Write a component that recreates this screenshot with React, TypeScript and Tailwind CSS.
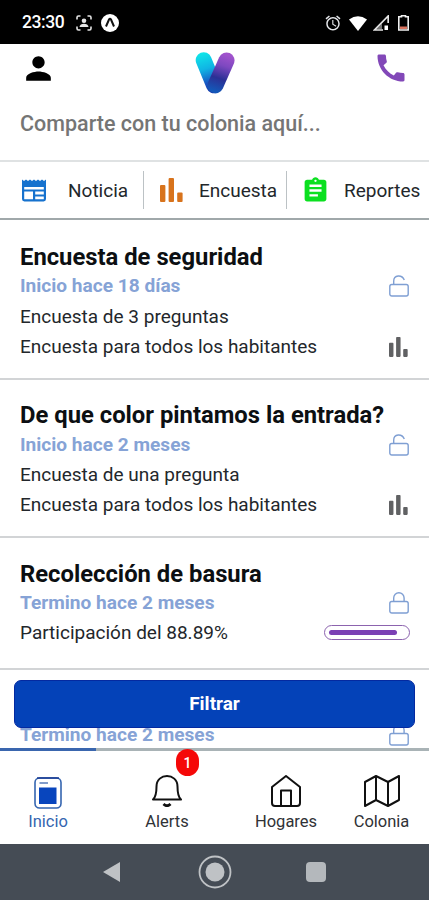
import React from "react";
import { MdAlarm, MdAssignment, MdCall, MdPerson } from "react-icons/md";

interface Survey {
  title: string;
  date: string;
  closed?: boolean;
  lines?: string[];
  participation?: number;
}

const surveys: Survey[] = [
  {
    title: "Encuesta de seguridad",
    date: "Inicio hace 18 días",
    lines: ["Encuesta de 3 preguntas", "Encuesta para todos los habitantes"],
  },
  {
    title: "De que color pintamos la entrada?",
    date: "Inicio hace 2 meses",
    lines: ["Encuesta de una pregunta", "Encuesta para todos los habitantes"],
  },
  { title: "Recolección de basura", date: "Termino hace 2 meses", closed: true, participation: 88.89 },
  { title: "", date: "Termino hace 2 meses", closed: true },
];

function BarsIcon({ className }: { className?: string }) {
  return (
    <svg viewBox="0 0 23 24" fill="currentColor" className={className}>
      <rect x="0" y="7" width="5.4" height="17" rx="1" />
      <rect x="8.6" y="0" width="5.4" height="24" rx="1" />
      <rect x="17.2" y="14.5" width="5.4" height="9.5" rx="1" />
    </svg>
  );
}

function LockIcon({ closed }: { closed?: boolean }) {
  return (
    <svg viewBox="0 0 20 22" fill="none" stroke="#7f9fd3" strokeWidth="1.4" className="h-[22px] w-5">
      <rect x="0.8" y="9.5" width="18.4" height="11.5" rx="2" />
      {closed ? <path d="M4.7 9.5V6a5.2 5.2 0 0 1 10.4 0v3.5" /> : <path d="M4.7 9.5V6.2C4.7-.4 13-.6 15.3 5" />}
    </svg>
  );
}

function NewsIcon() {
  return (
    <svg viewBox="0 0 24 23" className="h-[23px] w-6">
      <path
        d="M0 .5l2 1.6 2-1.6 2 1.6 2-1.6 2 1.6 2-1.6 2 1.6 2-1.6 2 1.6 2-1.6 2 1.6 2-1.6V20a2.4 2.4 0 0 1-2.4 2.4H2.4A2.4 2.4 0 0 1 0 20z"
        fill="#1672ce"
      />
      <path d="M2.2 8h19.6v2.4H2.2zM2.2 12.6h8.8v7.6H2.2zM13.2 12.6h8.6v2.8h-8.6zM13.2 17.5h8.6v2.7h-8.6z" fill="#fff" />
    </svg>
  );
}

function Logo() {
  return (
    <svg viewBox="0 0 40 44" fill="none" strokeWidth="16" strokeLinecap="round" className="mt-px h-11 w-10">
      <defs>
        <linearGradient id="left" x1="8" y1="2" x2="20" y2="40" gradientUnits="userSpaceOnUse">
          <stop offset="0" stopColor="#10e4e8" />
          <stop offset="0.4" stopColor="#10b4e4" />
          <stop offset="0.75" stopColor="#1756c4" />
          <stop offset="1" stopColor="#1838a8" />
        </linearGradient>
        <linearGradient id="right" x1="32" y1="4" x2="20" y2="40" gradientUnits="userSpaceOnUse">
          <stop offset="0" stopColor="#a052cc" />
          <stop offset="0.3" stopColor="#7d48c0" />
          <stop offset="0.65" stopColor="#2b3095" />
          <stop offset="1" stopColor="#1457b8" />
        </linearGradient>
      </defs>
      <path d="M8.7 9.2L19 34.3" stroke="url(#left)" />
      <path d="M31.5 9.4L20.5 34.3" stroke="url(#right)" />
    </svg>
  );
}

function StatusBar() {
  return (
    <div className="flex h-11 shrink-0 items-center bg-black pl-[22px] pr-5 pt-0.5 text-white">
      <span className="w-[54px] text-[17.5px] font-medium leading-none tracking-[-0.4px]">23:30</span>
      <svg viewBox="0 0 16 16" fill="none" stroke="#e5e5e5" strokeWidth="1.6" className="h-4 w-4">
        <path d="M1 4.5V2.5Q1 1 2.5 1H4.5M11.5 1h2Q15 1 15 2.5v2M15 11.5v2Q15 15 13.5 15h-2M4.5 15h-2Q1 15 1 13.5v-2" />
        <circle cx="8" cy="5.7" r="2.3" fill="#e5e5e5" stroke="none" />
        <path d="M3.5 12c0-4.5 9-4.5 9 0z" fill="#e5e5e5" stroke="none" />
      </svg>
      <svg viewBox="0 0 18 18" className="ml-[9px] h-[18px] w-[18px]">
        <circle cx="9" cy="9" r="9" fill="#fff" />
        <path d="M5 12.5L8 5.5q1-1.7 2 0l3 7" fill="none" stroke="#111" strokeWidth="2" />
      </svg>
      <div className="ml-auto flex items-center">
        <MdAlarm size={18} className="mr-[7px] text-gray-200" />
        <svg viewBox="0 0 18 15" className="mr-[6px] h-[15px] w-[18px]">
          <path d="M0 3.5Q9-3 18 3.5L9 15z" fill="#fff" />
        </svg>
        <svg viewBox="0 0 16 16" className="mr-[9px] h-4 w-4">
          <path d="M15.2 8V1L1.5 15H10" fill="none" stroke="#e5e5e5" strokeWidth="1.7" />
          <path d="M9 8.5L3.5 14H9z" fill="#e5e5e5" opacity="0.5" />
          <path d="M11.5 10.5h3.5V15h-3.5z" fill="#fff" />
        </svg>
        <svg viewBox="0 0 11 16" className="h-4 w-[11px]">
          <path d="M3.5 1.7V.8h4v.9h2.7V15H.8V1.7z" fill="none" stroke="#f1f1f1" strokeWidth="1.6" />
          <path d="M2 11.5h7V14H2z" fill="#d8715c" />
        </svg>
      </div>
    </div>
  );
}

function SurveyCard({ survey }: { survey: Survey }) {
  return (
    <article className="border-b-2 border-[#d2d4d6] pb-[16.3px] pl-5 pr-5 pt-[21.5px]">
      <h2 className="h-[29px] whitespace-nowrap text-[23.8px] font-bold leading-[29px] text-[#0c0f12]">{survey.title}</h2>
      <div className="flex h-[28.5px] items-center justify-between">
        <span className="text-[19.1px] font-bold leading-[28px] text-[#86a3d6]">{survey.date}</span>
        <LockIcon closed={survey.closed} />
      </div>
      {survey.lines ? (
        <>
          <p className="pt-px text-[19px] leading-[29.5px] text-[#23272b]">{survey.lines[0]}</p>
          <div className="flex h-[30.5px] items-center justify-between pt-px">
            <span className="text-[19px] text-[#23272b]">{survey.lines[1]}</span>
            <BarsIcon className="mr-px h-5 w-[19px] text-[#606163]" />
          </div>
        </>
      ) : null}
      {survey.participation ? (
        <div className="-mr-px mb-1 flex h-[30.5px] items-center justify-between">
          <span className="pt-px text-[19px] text-[#23272b]">Participación del {survey.participation}%</span>
          <div className="h-[15px] w-[86px] rounded-full border border-[#8c63ae] p-1">
            <div className="h-[5px] rounded-full bg-[#7b40b4]" style={{ width: `${survey.participation}%` }} />
          </div>
        </div>
      ) : null}
    </article>
  );
}

function TabBar() {
  return (
    <nav className="grid h-24 shrink-0 grid-cols-[96px_142px_96px_95px] text-[16.5px] leading-5 text-[#303236]">
      <div className="flex flex-col items-center border-t-[3px] border-[#3a66ae] pt-[26px] text-[#3565b0]">
        <svg viewBox="0 0 28 32" className="mb-[3px] h-8 w-7">
          <rect x="1" y="1" width="26" height="30" rx="4.5" fill="#fff" stroke="#3565b0" strokeWidth="1.6" />
          <path d="M3 1h22" stroke="#12338f" strokeWidth="1.4" />
          <path d="M5.5 6h8.5" stroke="#7391c6" strokeWidth="1.8" />
          <rect x="5" y="10.5" width="17.5" height="16.5" fill="#0845bd" />
        </svg>
        <span>Inicio</span>
      </div>
      <div className="flex flex-col items-center border-t-[3px] border-[#a9b3b6] pt-6">
        <div className="relative mb-[5px]">
          <svg viewBox="0 0 30 32" fill="none" stroke="#111" strokeWidth="2" className="h-8 w-[30px]">
            <path d="M1 24.5q3.5-3 3.5-13C4.5-2.5 25.5-2.5 25.5 11.5q0 10 3.5 13z" strokeLinejoin="round" />
            <path d="M11.5 29q3.5 3.5 7 0" strokeWidth="2.8" />
          </svg>
          <span className="absolute -top-[26px] left-[24px] flex h-[27px] w-[23px] items-center justify-center rounded-full bg-[#f50808] text-[14px] font-medium text-white">
            1
          </span>
        </div>
        <span>Alerts</span>
      </div>
      <div className="flex flex-col items-center border-t-[3px] border-[#a9b3b6] pt-6">
        <svg viewBox="0 0 30 32" fill="none" stroke="#111" strokeWidth="2" strokeLinejoin="round" className="mb-[5px] h-8 w-[30px]">
          <path d="M1 12L15 1l14 11v16q0 3-3 3H4q-3 0-3-3z" />
          <path d="M10 31V15.5h10V31" />
        </svg>
        <span>Hogares</span>
      </div>
      <div className="flex flex-col items-center border-t-[3px] border-[#a9b3b6] pt-6">
        <svg viewBox="0 0 36 32" fill="none" stroke="#111" strokeWidth="2" strokeLinejoin="round" className="mb-[5px] h-8 w-9">
          <path d="M1 7L12 1l12 6 11-6v24l-11 6-12-6-11 6zM12 1v24M24 7v24" />
        </svg>
        <span>Colonia</span>
      </div>
    </nav>
  );
}

export default function App() {
  return (
    <div className="flex h-[900px] w-[429px] flex-col overflow-hidden bg-white font-[Roboto,sans-serif]">
      <StatusBar />

      {/* Encabezado */}
      <header className="flex h-[118px] shrink-0 flex-col border-b-2 border-[#dfe2e3] pt-[6px]">
        <div className="flex items-start justify-between pl-5 pr-5">
          <MdPerson size={37} className="text-black" />
          <Logo />
          <MdCall size={36} className="text-[#8248b8]" />
        </div>
        <p className="pl-5 pt-[14px] text-[21.5px] font-medium leading-[30px] text-[#757575]">Comparte con tu colonia aquí...</p>
      </header>

      {/* Accesos rápidos */}
      <div className="grid h-[58px] shrink-0 grid-cols-[144px_143px_142px] items-center border-b-2 border-[#a0a8aa] text-[19px] text-[#23272b]">
        <div className="flex h-[38px] items-center gap-[22px] border-r border-[#bcc2c5] pl-[22px]">
          <NewsIcon />
          <span className="pt-0.5">Noticia</span>
        </div>
        <div className="flex h-[38px] items-center gap-4 border-r border-[#bcc2c5] pl-4">
          <BarsIcon className="h-6 w-[23px] text-[#d8731c]" />
          <span className="pt-0.5">Encuesta</span>
        </div>
        <div className="flex items-center gap-[14px] pl-[14px]">
          <MdAssignment size={29} className="text-[#0be020]" />
          <span className="pt-0.5">Reportes</span>
        </div>
      </div>

      {/* Lista de encuestas */}
      <main className="relative min-h-0 flex-1 overflow-hidden pt-[1.5px]">
        {surveys.map((survey, i) => (
          <SurveyCard key={i} survey={survey} />
        ))}
        <button
          type="button"
          className="absolute bottom-5 left-[14px] h-[48px] w-[401px] rounded-[7px] border border-[#0429a0] bg-[#0442b8] text-[19px] font-bold text-white"
        >
          Filtrar
        </button>
      </main>

      <TabBar />

      {/* Navegación del sistema */}
      <div className="flex h-14 shrink-0 items-center justify-between bg-[#454c55] pl-[103px] pr-[103px]">
        <svg viewBox="0 0 17 20" className="h-5 w-[17px]">
          <path d="M17 0v20L0 10z" fill="#bfc2c5" />
        </svg>
        <svg viewBox="0 0 34 34" className="ml-[3px] h-[34px] w-[34px]">
          <circle cx="17" cy="17" r="15.5" fill="none" stroke="#bfc2c5" strokeWidth="1.8" />
          <circle cx="17" cy="17" r="9.5" fill="#bfc2c5" />
        </svg>
        <div className="h-5 w-5 rounded-sm bg-[#b4b8bc]" />
      </div>
    </div>
  );
}
